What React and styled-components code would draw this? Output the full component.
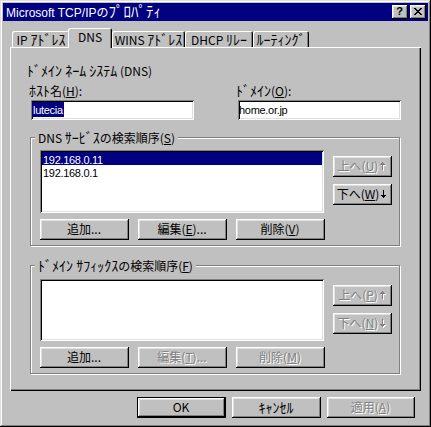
import React from "react";
import styled, { createGlobalStyle, css } from "styled-components";

const GlobalStyle = createGlobalStyle`
  html, body { margin: 0; padding: 0; background: #c0c0c0; }
  body {
    font-family: "Noto Sans CJK JP", "Liberation Sans", sans-serif;
    font-size: 12px;
    color: #000;
  }
  * { box-sizing: border-box; }
`;

const raised = css`
  box-shadow: inset -1px -1px 0 #000, inset 1px 1px 0 #fff,
    inset -2px -2px 0 #808080, inset 2px 2px 0 #dfdfdf;
`;

const sunken = css`
  box-shadow: inset 1px 1px 0 #808080, inset -1px -1px 0 #fff,
    inset 2px 2px 0 #000, inset -2px -2px 0 #dfdfdf;
`;

/* half-width katakana run, drawn a little larger as in the bitmap UI font */
const K = styled.span`
  font-size: ${(p) => p.$s || 14}px;
`;

/* narrow latin run (values, addresses) */
const Latin = styled.span`
  font-family: "Liberation Sans", sans-serif;
  font-size: 11px;
  letter-spacing: -0.3px;
`;

const Window = styled.div`
  width: 431px;
  height: 427px;
  padding: 3px;
  background: #c0c0c0;
  display: flex;
  flex-direction: column;
  box-shadow: inset -1px -1px 0 #000, inset 1px 1px 0 #dfdfdf,
    inset -2px -2px 0 #808080, inset 2px 2px 0 #fff;
`;

const TitleBar = styled.div`
  height: 18px;
  flex: none;
  background: #000080;
  color: #fff;
  display: flex;
  align-items: center;
  padding: 0 2px 0 3px;
`;

const TitleText = styled.span`
  font-family: "Liberation Sans", "Noto Sans CJK JP", sans-serif;
  font-size: 12px;
  line-height: 18px;
  white-space: nowrap;
`;

const CaptionButtons = styled.div`
  margin-left: auto;
  display: flex;
  gap: 2px;
`;

const CaptionButton = styled.div`
  width: 16px;
  height: 14px;
  background: #c0c0c0;
  ${raised};
  display: flex;
  align-items: center;
  justify-content: center;
  color: #000;
  font: bold 11px/11px "Liberation Sans", sans-serif;
  padding: 0 1px 1px 0;
`;

const Body = styled.div`
  flex: 1;
  display: flex;
  flex-direction: column;
  padding: 7px 7px 0 7px;
`;

const TabStrip = styled.div`
  height: 19px;
  flex: none;
  display: flex;
  align-items: flex-end;
  padding-left: 2px;
  position: relative;
  z-index: 1;
`;

const Tab = styled.div`
  width: ${(p) => p.$w}px;
  height: ${(p) => (p.$active ? 20 : 16)}px;
  margin-left: ${(p) => (p.$active ? -2 : 0)}px;
  margin-bottom: ${(p) => (p.$active ? -1 : 0)}px;
  line-height: 17px;
  position: relative;
  z-index: ${(p) => (p.$active ? 2 : 1)};
  background: #c0c0c0;
  border-radius: 2px 2px 0 0;
  box-shadow: inset 1px 1px 0 #fff, inset -1px 0 0 #000, inset -2px 0 0 #808080;
  text-align: center;
  white-space: nowrap;
`;

const Panel = styled.div`
  flex: 1;
  position: relative;
  z-index: 0;
  display: flex;
  flex-direction: column;
  padding: 16px 20px 0 20px;
  box-shadow: inset 1px 1px 0 #fff, inset -1px -1px 0 #000, inset -2px -2px 0 #808080;
`;

const Heading = styled.div`
  line-height: 14px;
  height: 14px;
  margin-left: -3px;
  white-space: nowrap;
`;

const FieldsRow = styled.div`
  display: grid;
  grid-template-columns: 163px 163px;
  justify-content: space-between;
  margin-top: 6px;
  padding-left: 1px;
`;

const Field = styled.div`
  display: flex;
  flex-direction: column;
`;

const Label = styled.div`
  line-height: 14px;
  height: 14px;
  margin-left: -2px;
  white-space: nowrap;
`;

const TextBox = styled.div`
  margin-top: 3px;
  height: 20px;
  background: #fff;
  ${sunken};
  padding: 2px 2px 0 1px;
  line-height: 13px;
  white-space: nowrap;
`;

const Selection = styled.span`
  display: inline-block;
  background: #000080;
  color: #fff;
  padding: 0 1px;
  line-height: 13px;
`;

const Group = styled.div`
  position: relative;
  margin-top: ${(p) => p.$mt}px;
  margin-right: 1px;
  border: 1px solid #808080;
  box-shadow: 1px 1px 0 #fff, inset 1px 1px 0 #fff;
  padding: ${(p) => p.$pt}px 7px 5px 9px;
  display: flex;
  flex-direction: column;
`;

const Legend = styled.div`
  position: absolute;
  top: -8px;
  left: 4px;
  padding: 0 3px;
  background: #c0c0c0;
  line-height: 14px;
  white-space: nowrap;
`;

const GroupTop = styled.div`
  display: flex;
  gap: 9px;
`;

const ListBox = styled.div`
  flex: 1;
  height: ${(p) => p.$h}px;
  background: #fff;
  ${sunken};
  padding: 2px;
  display: flex;
  flex-direction: column;
`;

const ListItem = styled.div`
  height: 13px;
  line-height: 13px;
  padding-left: 1px;
  background: ${(p) => (p.$selected ? "#000080" : "transparent")};
  color: ${(p) => (p.$selected ? "#fff" : "#000")};
  white-space: nowrap;
`;

const SideButtons = styled.div`
  width: 59px;
  display: flex;
  flex-direction: column;
  gap: 7px;
  padding-top: 6px;
`;

const ButtonRow = styled.div`
  display: flex;
  gap: 9px;
  margin-top: ${(p) => p.$mt}px;
`;

const Button = styled.div`
  width: ${(p) => p.$w}px;
  height: 21px;
  flex: none;
  background: #c0c0c0;
  display: flex;
  align-items: center;
  justify-content: center;
  gap: 2px;
  line-height: 14px;
  white-space: nowrap;
  padding: 0 1px 1px 0;
  color: ${(p) => (p.$disabled ? "#808080" : "#000")};
  text-shadow: ${(p) => (p.$disabled ? "1px 1px 0 #fff" : "none")};
  ${(p) =>
    p.$default
      ? css`
          box-shadow: inset 0 0 0 1px #000, inset -2px -2px 0 #000,
            inset 2px 2px 0 #fff, inset -3px -3px 0 #808080,
            inset 3px 3px 0 #dfdfdf;
        `
      : raised};
`;

const ButtonText = styled.span`
  white-space: nowrap;
`;

const Footer = styled.div`
  flex: none;
  display: flex;
  justify-content: flex-end;
  gap: 6px;
  padding: 6px 6px 6px 0;
`;

const U = styled.span`
  text-decoration: underline;
  text-underline-offset: 1px;
`;

function Arrow({ dir, disabled }) {
  const rects =
    dir === "up"
      ? [
          [2, 0, 1, 1],
          [1, 1, 3, 1],
          [0, 2, 5, 1],
          [2, 3, 1, 5],
        ]
      : [
          [2, 0, 1, 5],
          [0, 5, 5, 1],
          [1, 6, 3, 1],
          [2, 7, 1, 1],
        ];
  return (
    <svg width="6" height="9" viewBox="0 0 6 9" shapeRendering="crispEdges">
      {disabled &&
        rects.map(([x, y, w, h], i) => (
          <rect key={"s" + i} x={x + 1} y={y + 1} width={w} height={h} fill="#fff" />
        ))}
      {rects.map(([x, y, w, h], i) => (
        <rect key={i} x={x} y={y} width={w} height={h} fill={disabled ? "#808080" : "#000"} />
      ))}
    </svg>
  );
}

function CloseGlyph() {
  return (
    <svg width="8" height="7" viewBox="0 0 8 7" shapeRendering="crispEdges">
      {[0, 1, 2, 3, 4, 5, 6].map((i) => (
        <React.Fragment key={i}>
          <rect x={i} y={i} width="2" height="1" fill="#000" />
          <rect x={6 - i} y={i} width="2" height="1" fill="#000" />
        </React.Fragment>
      ))}
    </svg>
  );
}

function OrderGroup({ mt, pt, listH, legend, items, upKey, downKey, upDisabled, downDisabled, editKey, delKey, editDisabled, delDisabled }) {
  return (
    <Group $mt={mt} $pt={pt}>
      <Legend>{legend}</Legend>
      <GroupTop>
        <ListBox $h={listH}>
          {items.map((it, i) => (
            <ListItem key={it} $selected={i === 0}>
              <Latin>{it}</Latin>
            </ListItem>
          ))}
        </ListBox>
        <SideButtons>
          <Button $w={59} $disabled={upDisabled}>
            <ButtonText>
              上へ(<U>{upKey}</U>)
            </ButtonText>
            <Arrow dir="up" disabled={upDisabled} />
          </Button>
          <Button $w={59} $disabled={downDisabled}>
            <ButtonText>
              下へ(<U>{downKey}</U>)
            </ButtonText>
            <Arrow dir="down" disabled={downDisabled} />
          </Button>
        </SideButtons>
      </GroupTop>
      <ButtonRow $mt={6}>
        <Button $w={89}>
          <ButtonText>追加...</ButtonText>
        </Button>
        <Button $w={89} $disabled={editDisabled}>
          <ButtonText>
            編集(<U>{editKey}</U>)...
          </ButtonText>
        </Button>
        <Button $w={89} $disabled={delDisabled}>
          <ButtonText>
            削除(<U>{delKey}</U>)
          </ButtonText>
        </Button>
      </ButtonRow>
    </Group>
  );
}

export default function App() {
  return (
    <>
      <GlobalStyle />
      <Window>
        <TitleBar>
          <TitleText>
            Microsoft TCP/IPの<K $s={15}>ﾌﾟﾛﾊﾟﾃｨ</K>
          </TitleText>
          <CaptionButtons>
            <CaptionButton>?</CaptionButton>
            <CaptionButton>
              <CloseGlyph />
            </CaptionButton>
          </CaptionButtons>
        </TitleBar>
        <Body>
          <TabStrip>
            <Tab $w={58}>
              IP <K>ｱﾄﾞﾚｽ</K>
            </Tab>
            <Tab $w={44} $active>
              DNS
            </Tab>
            <Tab $w={73}>
              WINS <K>ｱﾄﾞﾚｽ</K>
            </Tab>
            <Tab $w={68}>
              DHCP <K>ﾘﾚｰ</K>
            </Tab>
            <Tab $w={56}>
              <K>ﾙｰﾃｨﾝｸﾞ</K>
            </Tab>
          </TabStrip>
          <Panel>
            <Heading>
              <K>ﾄﾞﾒｲﾝ ﾈｰﾑ ｼｽﾃﾑ</K> (DNS)
            </Heading>
            <FieldsRow>
              <Field>
                <Label>
                  <K>ﾎｽﾄ</K>名(<U>H</U>):
                </Label>
                <TextBox>
                  <Selection>
                    <Latin>lutecia</Latin>
                  </Selection>
                </TextBox>
              </Field>
              <Field>
                <Label>
                  <K>ﾄﾞﾒｲﾝ</K>(<U>O</U>):
                </Label>
                <TextBox>
                  <Latin>home.or.jp</Latin>
                </TextBox>
              </Field>
            </FieldsRow>
            <OrderGroup
              mt={17}
              pt={12}
              listH={63}
              legend={
                <>
                  DNS <K>ｻｰﾋﾞｽ</K>の検索順序(<U>S</U>)
                </>
              }
              items={["192.168.0.11", "192.168.0.1"]}
              upKey="U"
              downKey="W"
              upDisabled
              editKey="E"
              delKey="V"
            />
            <OrderGroup
              mt={19}
              pt={13}
              listH={62}
              legend={
                <>
                  <K>ﾄﾞﾒｲﾝ ｻﾌｨｯｸｽ</K>の検索順序(<U>F</U>)
                </>
              }
              items={[]}
              upKey="P"
              downKey="N"
              upDisabled
              downDisabled
              editKey="T"
              delKey="M"
              editDisabled
              delDisabled
            />
          </Panel>
          <Footer>
            <Button $w={89} $default>
              <ButtonText>OK</ButtonText>
            </Button>
            <Button $w={89}>
              <ButtonText>
                <K>ｷｬﾝｾﾙ</K>
              </ButtonText>
            </Button>
            <Button $w={88} $disabled>
              <ButtonText>
                適用(<U>A</U>)
              </ButtonText>
            </Button>
          </Footer>
        </Body>
      </Window>
    </>
  );
}
